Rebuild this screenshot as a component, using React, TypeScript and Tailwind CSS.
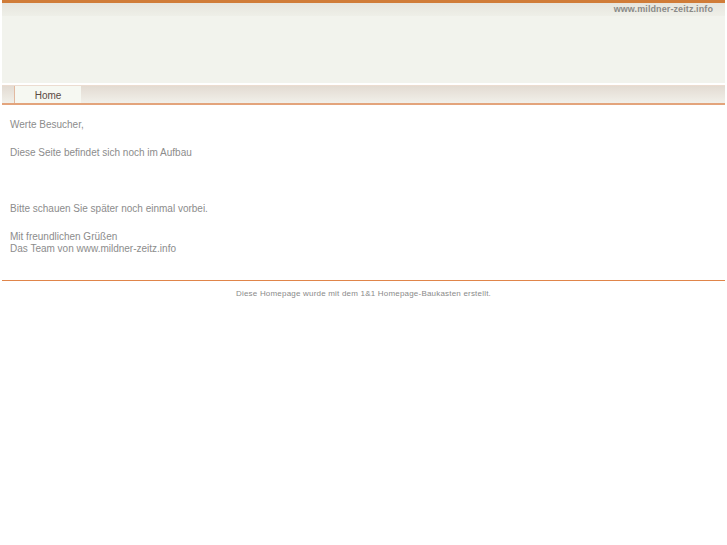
export default function App() {
  return (
    <div className="min-h-[545px] w-full bg-white font-['Liberation_Sans',Arial,sans-serif]">
      <div className="mx-[2px]">
        {/* Header */}
        <div className="h-[3px] bg-[#d07c38]" />
        <div className="relative">
          <div className="h-[13px] bg-gradient-to-b from-[#e7e5dd] to-[#eeefe8]" />
          <div className="h-[67px] bg-[#f2f3ed]" />
          <div className="absolute right-[12px] top-[1px] text-[9px] leading-[10px] font-bold tracking-[0.1px] text-[#8a8a88]">
            www.mildner-zeitz.info
          </div>
        </div>
        <div className="h-[2px] bg-white" />
        {/* Nav */}
        <div className="h-px bg-[#ecdcd0]" />
        <div className="flex h-[17px] bg-gradient-to-b from-[#e3dbd2] to-[#f1f0ea]">
          <div className="ml-[12px] w-px bg-[#e2b9a0]" />
          <div className="flex w-[66px] items-center justify-center bg-[#f6f8f2] pt-px text-[10px] text-[#5b4a44]">
            Home
          </div>
        </div>
        <div className="h-[2px] bg-[#e3a47c]" />

        {/* Content */}
        <div className="px-[8px] pt-[14px] text-[10px] leading-[12px] text-[#8c8c8c]">
          <p className="mb-[16px]">Werte Besucher,</p>
          <p className="mb-[16px]">Diese Seite befindet sich noch im Aufbau</p>
          <p className="mb-[16px]">&nbsp;</p>
          <p className="mb-[16px]">Bitte schauen Sie später noch einmal vorbei.</p>
          <p>Mit freundlichen Grüßen</p>
          <p>Das Team von www.mildner-zeitz.info</p>
        </div>

        {/* Footer */}
        <div className="mt-[25px] border-t border-[#e0854a]" />
        <div className="pt-[8px] text-center text-[8px] leading-[10px] tracking-[0.2px] text-[#8a8a8a]">
          Diese Homepage wurde mit dem 1&amp;1 Homepage-Baukasten erstellt.
        </div>
      </div>
    </div>
  );
}
